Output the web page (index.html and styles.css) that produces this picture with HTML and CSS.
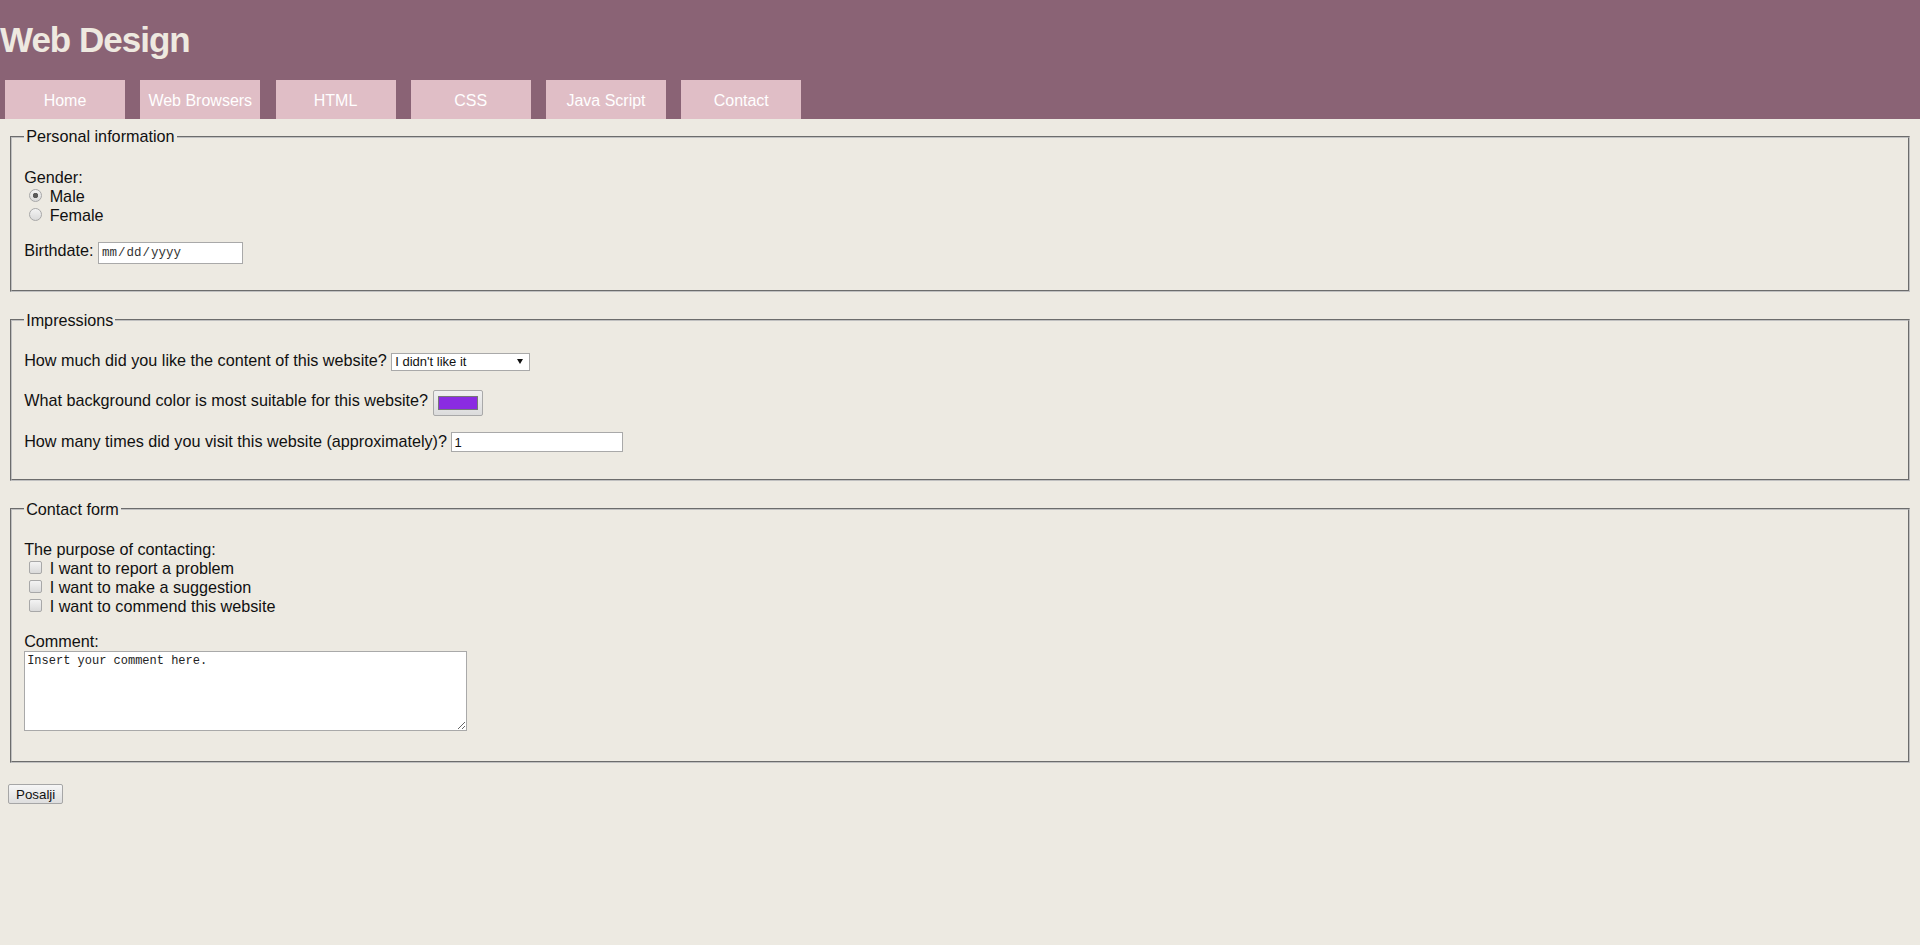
FILE: index.html
```html
<!DOCTYPE html>
<html lang="en">
<head>
<meta charset="utf-8">
<title>Web Design</title>
<link rel="stylesheet" href="styles.css">
</head>
<body>
<header class="site-header">
  <h1 class="site-title">Web Design</h1>
  <nav class="main-nav">
    <a href="#">Home</a>
    <a href="#">Web Browsers</a>
    <a href="#">HTML</a>
    <a href="#">CSS</a>
    <a href="#">Java Script</a>
    <a href="#">Contact</a>
  </nav>
</header>
<main class="page">
  <form class="survey">
    <fieldset class="panel">
      <legend>Personal information</legend>
      <p class="field-row">Gender:<br>
        <label class="choice"><input type="radio" name="gender" checked> Male</label><br>
        <label class="choice"><input type="radio" name="gender"> Female</label>
      </p>
      <p class="field-row">Birthdate: <input class="date-field" type="date"></p>
    </fieldset>

    <fieldset class="panel">
      <legend>Impressions</legend>
      <p class="field-row">How much did you like the content of this website? <span class="select-wrap"><select class="select-field"><option>I didn't like it</option><option>It was OK</option><option>I liked it</option></select></span></p>
      <p class="field-row">What background color is most suitable for this website? <input class="color-field" type="color" value="#8a2be2"></p>
      <p class="field-row">How many times did you visit this website (approximately)? <input class="number-field" type="number" value="1"></p>
    </fieldset>

    <fieldset class="panel">
      <legend>Contact form</legend>
      <p class="field-row">The purpose of contacting:<br>
        <label class="choice"><input type="checkbox"> I want to report a problem</label><br>
        <label class="choice"><input type="checkbox"> I want to make a suggestion</label><br>
        <label class="choice"><input type="checkbox"> I want to commend this website</label>
      </p>
      <p class="field-row">Comment:<br><textarea class="comment-field" rows="5" cols="50">Insert your comment here.</textarea></p>
    </fieldset>

    <div class="actions"><button class="send-btn" type="submit">Posalji</button></div>
  </form>
</main>
</body>
</html>
```
FILE: styles.css
```css
html, body {
  margin: 0;
  padding: 0;
}

body {
  background: #edeae2;
  font-family: "Liberation Sans", Arial, sans-serif;
  font-size: 16.2px;
  line-height: 19px;
  color: #111;
}

/* ---------- header ---------- */
.site-header {
  background: #8a6375;
  padding-top: 20px;
}

.site-title {
  margin: 0;
  font-size: 35px;
  line-height: 40px;
  letter-spacing: -1px;
  font-weight: bold;
  color: #eee9e0;
}

.main-nav {
  display: flex;
  gap: 15.25px;
  padding-left: 5px;
  margin-top: 20px;
}

.main-nav a {
  width: 120px;
  height: 37px;
  padding-top: 2px;
  line-height: 37px;
  text-align: center;
  background: #e0bec6;
  color: #fff;
  text-decoration: none;
  font-size: 16px;
}

/* ---------- form ---------- */
.page {
  padding: 8px 8px 0;
}

.survey {
  margin: 0;
}

.panel {
  margin: 0 2px 19px;
  padding: 0.35em 0.75em 0.625em;
  border: 2px groove #c0c0c0;
}

.panel legend {
  padding: 0 2px;
}

.field-row {
  margin: 16px 0;
}

input, select, textarea, button {
  margin: 0;
  box-sizing: border-box;
}

/* radios & checkboxes */
.choice input {
  -webkit-appearance: none;
  appearance: none;
  width: 13px;
  height: 13px;
  margin: 0 3px 0 5px;
  vertical-align: baseline;
  border: 1px solid #a8a8a8;
  background: linear-gradient(#f3f3f3, #dadada);
}

.choice input[type="radio"] {
  border-radius: 50%;
}

.choice input[type="radio"]:checked {
  background: radial-gradient(circle, #5a5a5a 0 2.4px, transparent 3px), linear-gradient(#f3f3f3, #dadada);
}

.choice input[type="checkbox"] {
  border-radius: 2px;
}

/* date */
.date-field {
  width: 145px;
  height: 22px;
  border: 1px solid #a9a9a9;
  background: #fff;
  padding: 0 2px;
  font-family: "Liberation Mono", monospace;
  font-size: 12.5px;
  color: #333;
}

.date-field::-webkit-calendar-picker-indicator {
  display: none;
}

/* select */
.select-wrap {
  position: relative;
  display: inline-flex;
}

.select-wrap::after {
  content: "";
  position: absolute;
  right: 7px;
  top: 6px;
  border-left: 3px solid transparent;
  border-right: 3px solid transparent;
  border-top: 5px solid #111;
  pointer-events: none;
}

.select-field {
  -webkit-appearance: none;
  appearance: none;
  width: 139px;
  height: 18px;
  border: 1px solid #a9a9a9;
  border-radius: 0;
  background: #fff;
  padding: 0 0 0 3px;
  font-family: "Liberation Sans", Arial, sans-serif;
  font-size: 13px;
  color: #111;
}

/* colour */
.color-field {
  -webkit-appearance: none;
  appearance: none;
  width: 50px;
  height: 26px;
  margin-top: 3px;
  padding: 5px 4px;
  border: 1px solid #a9a9a9;
  border-radius: 2px;
  background: linear-gradient(#f0f0f0, #dcdcdc);
  vertical-align: middle;
}

.color-field::-webkit-color-swatch-wrapper {
  padding: 0;
}

.color-field::-webkit-color-swatch {
  border: 1px solid #777;
  border-radius: 0;
}

/* number */
.number-field {
  width: 172px;
  height: 20px;
  border: 1px solid #a9a9a9;
  background: #fff;
  padding: 1px 2px;
  font-family: "Liberation Sans", Arial, sans-serif;
  font-size: 13px;
  color: #111;
}

.number-field::-webkit-inner-spin-button,
.number-field::-webkit-outer-spin-button {
  -webkit-appearance: none;
  margin: 0;
}

/* textarea */
.comment-field {
  width: 443px;
  height: 80px;
  border: 1px solid #a9a9a9;
  background: #fff;
  padding: 2px;
  font-family: "Liberation Mono", monospace;
  font-size: 12px;
  color: #222;
}

/* submit */
.actions {
  display: flex;
  padding-top: 2px;
}

.send-btn {
  height: 20px;
  padding: 0 7px;
  border: 1px solid #a6a6a6;
  border-radius: 2px;
  background: linear-gradient(#f6f6f6, #dedede);
  font-family: "Liberation Sans", Arial, sans-serif;
  font-size: 13.33px;
  color: #111;
}
```
